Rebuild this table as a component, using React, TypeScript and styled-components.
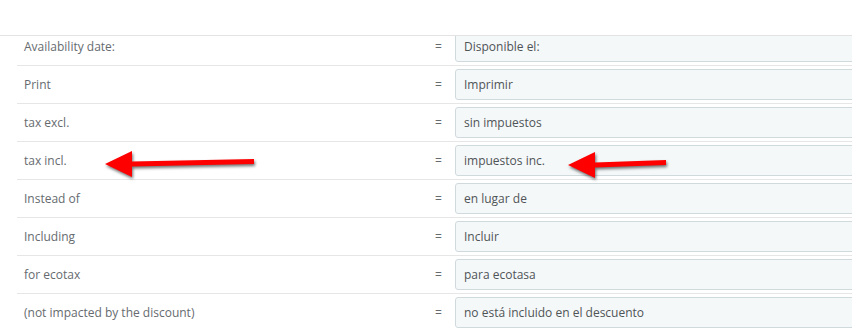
import styled, { createGlobalStyle } from "styled-components";

const GlobalStyle = createGlobalStyle`
  html, body {
    margin: 0;
    padding: 0;
    background: #fff;
  }
  body {
    font-family: "Open Sans", "Liberation Sans", sans-serif;
    overflow: hidden;
  }
`;

const Page = styled.div`
  position: relative;
  width: 852px;
  height: 329px;
  overflow: hidden;
`;

const TopBar = styled.div`
  height: 35px;
  border-bottom: 1px solid #e3e3e3;
  background: #fff;
  position: relative;
  z-index: 1;
`;

const Table = styled.div`
  padding-left: 17px;
`;

const Row = styled.div<{ $cut?: boolean }>`
  display: grid;
  grid-template-columns: 405px 33px 420px;
  align-items: center;
  height: 37px;
  border-bottom: 1px solid #e6e6e6;
  margin-top: ${({ $cut }) => ($cut ? "-8px" : "0")};
`;

const Label = styled.div`
  padding-left: 7px;
  font-size: 12px;
  color: #666b6f;
`;

const Equals = styled.div`
  text-align: center;
  font-size: 12px;
  color: #666b6f;
`;

const Field = styled.div`
  box-sizing: border-box;
  height: 31px;
  display: flex;
  align-items: center;
  padding: 0 8px;
  background: #f5f8f9;
  border: 1px solid #d0dadd;
  border-radius: 3px;
  font-size: 12px;
  color: #4f5457;
`;

const Arrow = styled.svg`
  position: absolute;
  overflow: visible;
  z-index: 2;
  filter: drop-shadow(1px 2px 1.5px rgba(0, 0, 0, 0.55));
`;

const rows = [
  ["Availability date:", "Disponible el:"],
  ["Print", "Imprimir"],
  ["tax excl.", "sin impuestos"],
  ["tax incl.", "impuestos inc."],
  ["Instead of", "en lugar de"],
  ["Including", "Incluir"],
  ["for ecotax", "para ecotasa"],
  ["(not impacted by the discount)", "no está incluido en el descuento"],
];

// red pointer arrow: head on the left, shaft running to the right
const RedArrow = ({ left, top, length }: { left: number; top: number; length: number }) => (
  <Arrow
    style={{ left, top }}
    width={length}
    height={28}
    viewBox={`0 0 ${length} 28`}
  >
    <polygon
      points={`0,13 27,0 27,10.5 ${length},8 ${length},13 27,15.5 27,26`}
      fill="#ff0000"
    />
  </Arrow>
);

export default function App() {
  return (
    <>
      <GlobalStyle />
      <Page>
        <TopBar />
        <Table>
          {rows.map(([label, value], i) => (
            <Row key={label} $cut={i === 0}>
              <Label>{label}</Label>
              <Equals>=</Equals>
              <Field>{value}</Field>
            </Row>
          ))}
        </Table>
        <RedArrow left={105} top={151} length={149} />
        <RedArrow left={568} top={152} length={98} />
      </Page>
    </>
  );
}
